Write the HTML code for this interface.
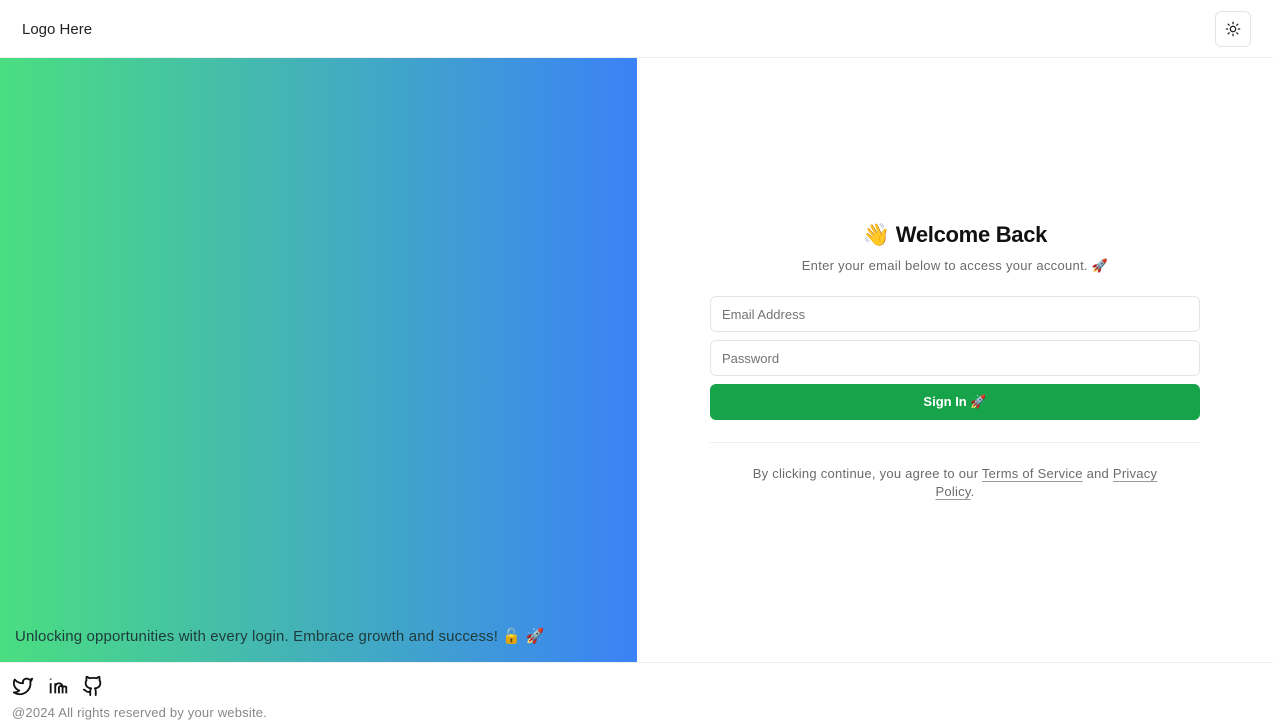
<!DOCTYPE html>
<html><head><meta charset="utf-8"><style>
*{box-sizing:border-box;margin:0;padding:0}
body{width:1273px;height:728px;overflow:hidden;font-family:"Liberation Sans",sans-serif;background:#fff;color:#111;position:relative}
.hdr{position:absolute;left:0;top:0;width:1273px;height:58px;border-bottom:1px solid #eee}
.logo{position:absolute;left:22px;top:21px;font-size:15px;color:#222}
.theme{position:absolute;left:1215px;top:11px;width:36px;height:36px;border:1px solid #e5e5e5;border-radius:6px;display:flex;align-items:center;justify-content:center}
.grad{position:absolute;left:0;top:58px;width:637px;height:604px;background:linear-gradient(90deg,#4ade80,#3b82f6)}
.grad p{position:absolute;left:15px;bottom:17px;font-size:15px;color:#1f3a3a;letter-spacing:0.15px}
.form{position:absolute;left:710px;top:222px;width:490px;text-align:center}
h1{font-size:22px;font-weight:bold;letter-spacing:-0.3px}
.sub{margin-top:10px;font-size:13px;color:#6b6b6b;letter-spacing:0.3px}
.inp{margin-top:8px;height:36px;border:1px solid #e5e5e5;border-radius:6px;text-align:left;padding:10px 11px;font-size:13px;color:#737373}
.btn{margin-top:8px;height:36px;background:#16a34a;border-radius:6px;color:#fff;font-weight:bold;font-size:13px;line-height:36px}
hr{border:0;border-top:1px solid #eee;margin:22px 0 0}
.terms{margin:22px auto 0;width:420px;font-size:13px;color:#6b6b6b;line-height:18px;letter-spacing:0.25px}
.terms u{text-decoration:underline;text-decoration-color:#999;text-underline-offset:3px}
.ftr{position:absolute;left:0;top:662px;width:1273px;height:66px;border-top:1px solid #eee}
.icons{position:absolute;left:12px;top:12px;display:flex;gap:13px}
.copy{position:absolute;left:12px;top:42px;font-size:13px;color:#888;letter-spacing:0.2px}
</style></head><body>
<div class="hdr"><div class="logo">Logo Here</div>
<div class="theme"><svg width="16" height="16" viewBox="0 0 24 24" fill="none" stroke="#222" stroke-width="2" stroke-linecap="round"><circle cx="12" cy="12" r="4"/><path d="M12 2v2M12 20v2M4.9 4.9l1.4 1.4M17.7 17.7l1.4 1.4M2 12h2M20 12h2M6.3 17.7l-1.4 1.4M19.1 4.9l-1.4 1.4"/></svg></div></div>
<div class="grad"><p>Unlocking opportunities with every login. Embrace growth and success! 🔓 🚀</p></div>
<div class="form">
<h1>👋 Welcome Back</h1>
<div class="sub">Enter your email below to access your account. 🚀</div>
<div class="inp" style="margin-top:22px">Email Address</div>
<div class="inp">Password</div>
<div class="btn">Sign In 🚀</div>
<hr>
<div class="terms">By clicking continue, you agree to our <u>Terms of Service</u> and <u>Privacy Policy</u>.</div>
</div>
<div class="ftr"><div class="icons">
<svg width="22" height="22" viewBox="0 0 24 24" fill="none" stroke="#111" stroke-width="2" stroke-linejoin="round"><path d="M22 4s-.7 2.1-2 3.4c1.6 10-9.4 17.3-18 11.6 2.2.1 4.4-.6 6-2C3 15.5.5 9.6 3 5c2.2 2.6 5.6 4.1 9 4-.9-4.2 4-6.6 7-3.8 1.1 0 3-1.2 3-1.2z"/></svg>
<svg width="22" height="22" viewBox="0 0 24 24" fill="none" stroke="#111" stroke-width="2"><path d="M4 9v11M4 4v1M9 20V9h0M9 13a4 4 0 0 1 8 0v7M13 20v-6a2 2 0 0 1 4 0"/><path d="M17 13a4 4 0 0 1 4 0v7"/></svg>
<svg width="22" height="22" viewBox="0 0 24 24" fill="none" stroke="#111" stroke-width="2" stroke-linecap="round" stroke-linejoin="round"><path d="M15 22v-4a4.8 4.8 0 0 0-1-3.5c3 0 6-2 6-5.5.1-1.3-.3-2.5-1-3.5.3-1.2.3-2.4 0-3.5 0 0-1 0-3 1.500-2.6-.5-5.4-.5-8 0C6 2 5 2 5 2c-.3 1.1-.3 2.3 0 3.5A5.4 5.4 0 0 0 4 9c0 3.5 3 5.5 6 5.5-.4.5-.7 1.1-.8 1.7-.2.6-.2 1.2-.2 1.8v4M9 18c-4.5 2-5-2-7-2"/></svg>
</div><div class="copy">@2024 All rights reserved by your website.</div></div>
</body></html>
